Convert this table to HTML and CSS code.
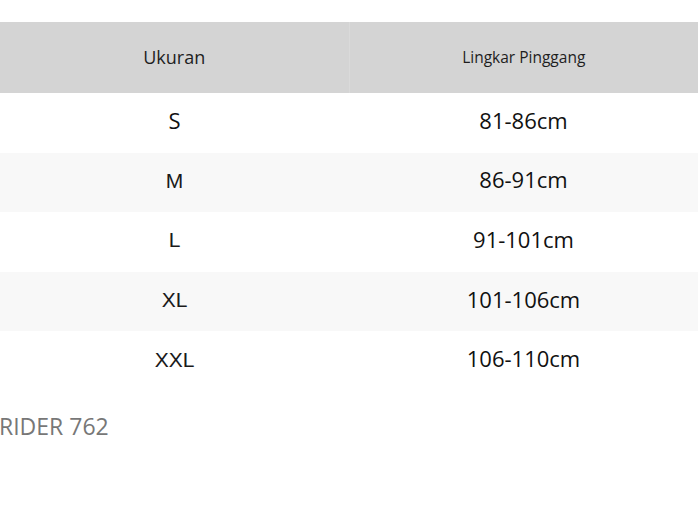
FILE: index.html
```html
<!DOCTYPE html>
<html lang="id">
<head>
<meta charset="utf-8">
<title>Ukuran</title>
<link rel="stylesheet" href="styles.css">
</head>
<body>
<table class="size-table">
  <thead>
    <tr>
      <th class="h-size">Ukuran</th>
      <th class="h-waist">Lingkar Pinggang</th>
    </tr>
  </thead>
  <tbody>
    <tr><td class="open">S</td><td>81-86cm</td></tr>
    <tr><td class="arial">M</td><td>86-91cm</td></tr>
    <tr><td class="arial">L</td><td>91-101cm</td></tr>
    <tr><td class="arial">XL</td><td>101-106cm</td></tr>
    <tr><td class="arial">XXL</td><td>106-110cm</td></tr>
  </tbody>
</table>
<p class="product">RIDER 762</p>
</body>
</html>
```
FILE: styles.css
```css
html, body {
  margin: 0;
  padding: 0;
  background: #ffffff;
}
body {
  font-family: "Open Sans", "Noto Sans", sans-serif;
  color: #1a1a1a;
  padding-top: 22px;
}
.size-table {
  width: 698px;
  border-collapse: collapse;
  table-layout: fixed;
}
.size-table th,
.size-table td {
  box-sizing: border-box;
}
.size-table th {
  background: #d4d4d4;
  height: 71px;
  padding: 0 0 2px;
  font-weight: 400;
  color: #1e1e1e;
  text-align: center;
  vertical-align: middle;
}
.size-table th + th {
  border-left: 1px solid #dadada;
}
.h-size {
  font-size: 18px;
}
.h-waist {
  font-size: 15.5px;
}
.size-table td {
  height: 59.6px;
  padding: 0 0 6px;
  line-height: 24px;
  text-align: center;
  vertical-align: middle;
  font-size: 22px;
  color: #111111;
}
.size-table tbody tr:nth-child(even) td {
  background: #f8f8f8;
}
.size-table td.arial {
  font-family: "Liberation Sans", Arial, sans-serif;
  font-size: 21px;
  color: #1a1a1a;
  padding-bottom: 3px;
}
.product {
  margin: 20px 0 0 -1px;
  font-size: 23px;
  color: #777777;
  line-height: 30px;
}
```
